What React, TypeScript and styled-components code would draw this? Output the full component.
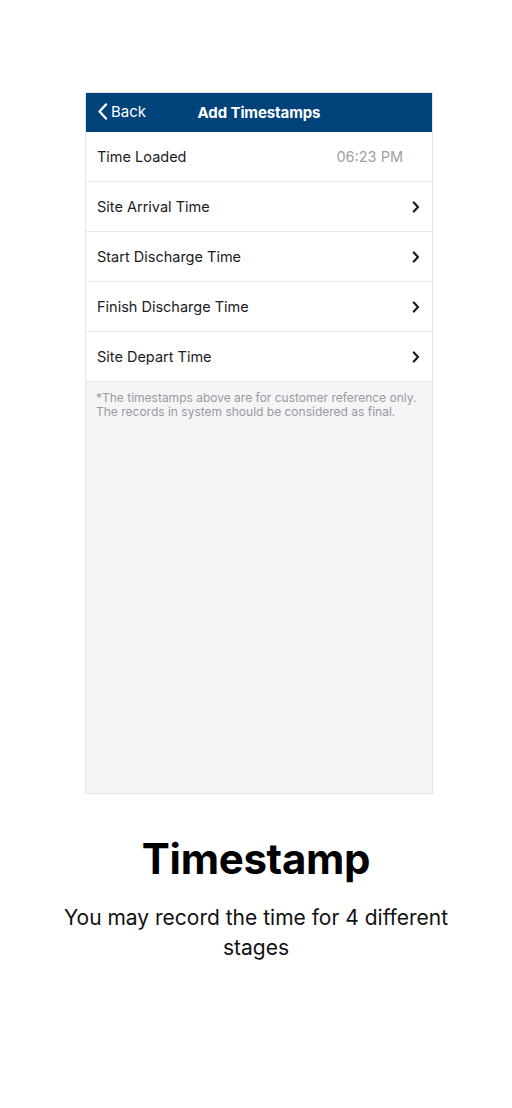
import React from "react";
import styled, { createGlobalStyle } from "styled-components";

const Global = createGlobalStyle`
  html, body { margin: 0; padding: 0; background: #ffffff; }
  body { font-family: Inter, "Noto Sans", sans-serif; -webkit-font-smoothing: antialiased; }
`;

const Page = styled.div`
  width: 512px;
  height: 1108px;
  display: flex;
  flex-direction: column;
  align-items: center;
  padding-top: 92px;
  box-sizing: border-box;
`;

const Phone = styled.div`
  width: 348px;
  height: 702px;
  box-sizing: border-box;
  border: 1px solid #e4e4e9;
  background: #f5f5f7;
  display: flex;
  flex-direction: column;
  margin-left: 6px;
`;

const NavBar = styled.div`
  height: 39px;
  background: #00427a;
  display: flex;
  align-items: center;
  position: relative;
  color: #fff;
  flex-shrink: 0;
`;

const BackBtn = styled.div`
  display: flex;
  align-items: center;
  gap: 3px;
  padding-left: 11px;
  font-size: 15px;
  color: #ffffff;
  margin-top: -3px;
`;

const NavTitle = styled.div`
  position: absolute;
  left: 0;
  right: 0;
  text-align: center;
  font-weight: 700;
  font-size: 15px;
  letter-spacing: -0.1px;
  pointer-events: none;
`;

const List = styled.div`
  display: flex;
  flex-direction: column;
  background: #fff;
`;

const Row = styled.div`
  height: 49px;
  display: flex;
  align-items: center;
  justify-content: space-between;
  padding: 0 12px 0 11px;
  border-bottom: 1px solid #e8e8ed;
  background: #fff;
  font-size: 14.5px;
  color: #1c1c1e;
`;

const Value = styled.span`
  color: #a0a0a5;
  font-size: 14.5px;
  margin-right: 17px;
`;

const Note = styled.div`
  padding: 9px 10px;
  font-size: 12px;
  line-height: 14px;
  color: #9a9a9f;
`;

const Title = styled.h1`
  margin: 40px 0 0 0;
  font-size: 42px;
  font-weight: 700;
  color: #000;
  letter-spacing: -0.3px;
  line-height: 50px;
`;

const Subtitle = styled.p`
  margin: 19px 0 0 0;
  width: 420px;
  text-align: center;
  font-size: 21px;
  line-height: 30px;
  color: #111;
`;

const Chevron = () => (
  <svg width="8" height="12" viewBox="0 0 8 12">
    <path d="M1.8 1.5 L6 6 L1.8 10.5" fill="none" stroke="#1c1c1e" strokeWidth="2.2" strokeLinecap="round" strokeLinejoin="round" />
  </svg>
);

const BackChevron = () => (
  <svg width="11" height="17" viewBox="0 0 11 17">
    <path d="M9 1.5 L2.5 8.5 L9 15.5" fill="none" stroke="#fff" strokeWidth="2.4" strokeLinecap="round" strokeLinejoin="round" />
  </svg>
);

const rows = ["Site Arrival Time", "Start Discharge Time", "Finish Discharge Time", "Site Depart Time"];

export default function App() {
  return (
    <>
      <Global />
      <Page>
        <Phone>
          <NavBar>
            <BackBtn>
              <BackChevron />
              <span>Back</span>
            </BackBtn>
            <NavTitle>Add Timestamps</NavTitle>
          </NavBar>
          <List>
            <Row>
              <span>Time Loaded</span>
              <Value>06:23 PM</Value>
            </Row>
            {rows.map((r) => (
              <Row key={r}>
                <span>{r}</span>
                <Chevron />
              </Row>
            ))}
          </List>
          <Note>
            *The timestamps above are for customer reference only.
            <br />
            The records in system should be considered as final.
          </Note>
        </Phone>
        <Title>Timestamp</Title>
        <Subtitle>You may record the time for 4 different stages</Subtitle>
      </Page>
    </>
  );
}
